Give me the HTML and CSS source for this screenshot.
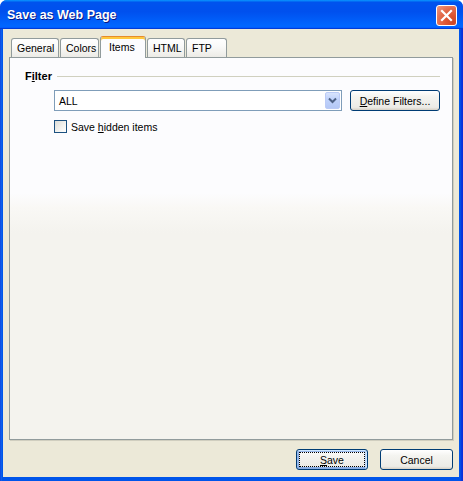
FILE: index.html
```html
<!DOCTYPE html>
<html>
<head>
<meta charset="utf-8">
<title>Save as Web Page</title>
<link rel="stylesheet" href="styles.css">
</head>
<body>
<div class="window">
  <div class="titlebar">
    <span class="title">Save as Web Page</span>
    <span class="close">
      <svg width="13" height="13" viewBox="0 0 13 13"><path d="M2 2 L11 11 M11 2 L2 11" stroke="#fff" stroke-width="2.2" stroke-linecap="square"/></svg>
    </span>
  </div>
  <div class="client">
    <div class="tabstrip">
      <div class="tab w-general">General</div>
      <div class="tab w-colors">Colors</div>
      <div class="tab selected w-items">Items</div>
      <div class="tab w-html">HTML</div>
      <div class="tab w-ftp">FTP</div>
    </div>
    <div class="pane">
      <div class="group-head">
        <span class="group-label">F<u>i</u>lter</span>
        <span class="group-line"></span>
      </div>
      <div class="filter-row">
        <div class="combo">
          <span class="combo-text">ALL</span>
          <span class="combo-btn">
            <svg width="9" height="7" viewBox="0 0 9 7"><path d="M1 1.5 L4.5 5 L8 1.5" fill="none" stroke="#4D6185" stroke-width="2"/></svg>
          </span>
        </div>
        <button class="btn define"><u>D</u>efine Filters...</button>
      </div>
      <label class="check-row">
        <span class="checkbox"></span>
        <span>Save <u>h</u>idden items</span>
      </label>
    </div>
    <div class="buttons">
      <button class="btn default"><span class="focus"><u>S</u>ave</span></button>
      <button class="btn cancel">Cancel</button>
    </div>
  </div>
</div>
</body>
</html>
```
FILE: styles.css
```css
html, body {
  margin: 0;
  padding: 0;
  background: #ffffff;
}
body {
  font-family: "Liberation Sans", Arial, sans-serif;
  font-size: 10.5px;
  color: #000;
}
.window {
  width: 463px;
  height: 481px;
  box-sizing: border-box;
  display: flex;
  flex-direction: column;
  background: linear-gradient(90deg, #0831D9 0, #166AEE 1px, #0055EA 2px, #0055EA 460px, #0831D9 462px);
  border-radius: 7px 7px 0 0;
  overflow: hidden;
}
.titlebar {
  height: 29px;
  flex: none;
  display: flex;
  align-items: center;
  justify-content: space-between;
  padding: 0 6px 0 7px;
  background: linear-gradient(180deg, #0997FF, #0053EE 8%, #0050EE 40%, #0066FF 88%, #0066FF 93%, #005BFF 95%, #003DD7 96%, #003DD7);
}
.title {
  font-family: "Liberation Sans", Arial, sans-serif;
  font-weight: bold;
  font-size: 12.5px;
  color: #fff;
  text-shadow: 1px 1px #0A1883;
  padding-top: 1px;
}
.close {
  width: 19px;
  height: 19px;
  border: 1px solid #fff;
  border-radius: 3px;
  background: radial-gradient(circle at 85% 85%, #CC4625 0, #DC5531 30%, #E36B4B 60%, #F09A80 100%);
  display: flex;
  align-items: center;
  justify-content: center;
  margin-top: 1px;
}
.client {
  flex: 1;
  margin: 0 4px 4px 3px;
  background: #ECE9D8;
  display: flex;
  flex-direction: column;
  padding: 7px 6px 7px 6px;
}
.tabstrip {
  height: 21px;
  display: flex;
  align-items: flex-end;
  gap: 1px;
  padding-left: 2px;
}
.tab {
  box-sizing: border-box;
  height: 19px;
  border: 1px solid #919B9C;
  border-bottom: none;
  border-radius: 3px 3px 0 0;
  background: linear-gradient(180deg, #FFFFFF 0, #FAFAF9 40%, #ECEBE6 100%);
  display: flex;
  align-items: center;
  padding-left: 5px;
  white-space: nowrap;
}
.tab.selected {
  height: 22px;
  margin-bottom: -1px;
  position: relative;
  z-index: 1;
  background: #FCFCFE;
  border-top: 1px solid #E68B2C;
  box-shadow: inset 0 2px #FFC83C;
  padding-left: 8px;
  padding-bottom: 2px;
}
.w-general { width: 48px; }
.w-colors { width: 39px; }
.w-items { width: 46px; }
.w-html { width: 38px; }
.w-ftp { width: 41px; }
.pane {
  height: 383px;
  box-sizing: border-box;
  border: 1px solid #919B9C;
  box-shadow: 1px 1px #D0CEBF;
  background: linear-gradient(180deg, #FCFCFE 0, #FCFCFE 135px, #F9F8F5 150px, #F4F3EE 175px, #F4F3EE 100%);
  padding: 11px 12px 0 15px;
  display: flex;
  flex-direction: column;
}
.group-head {
  display: flex;
  align-items: center;
  height: 14px;
}
.group-label {
  font-weight: bold;
  font-size: 11px;
  color: #000;
}
.group-line {
  flex: 1;
  height: 0;
  border-top: 1px solid #D0D0BF;
  margin-left: 5px;
}
.filter-row {
  display: flex;
  margin-top: 7px;
  margin-left: 29px;
  gap: 8px;
}
.combo {
  width: 288px;
  height: 21px;
  box-sizing: border-box;
  border: 1px solid #7F9DB9;
  background: #fff;
  display: flex;
  align-items: center;
  justify-content: space-between;
  padding: 1px 1px 1px 4px;
}
.combo-btn {
  width: 15px;
  height: 17px;
  box-sizing: border-box;
  border: 1px solid #BBCBF6;
  border-radius: 2px;
  background: linear-gradient(180deg, #D8E4FD 0, #C1D3FB 40%, #B4C8F6 100%);
  display: flex;
  align-items: center;
  justify-content: center;
}
.btn {
  font-family: "Liberation Sans", Arial, sans-serif;
  font-size: 10.5px;
  color: #000;
  height: 21px;
  box-sizing: border-box;
  border: 1px solid #003C74;
  border-radius: 3px;
  background: linear-gradient(180deg, #FFFFFF 0, #F4F4F0 30%, #ECEBE6 86%, #D6D0C5 100%);
  padding: 0;
  display: flex;
  align-items: center;
  justify-content: center;
}
.define {
  width: 90px;
}
.check-row {
  display: flex;
  align-items: center;
  margin-top: 9px;
  margin-left: 29px;
  gap: 4px;
  height: 13px;
}
.checkbox {
  width: 13px;
  height: 13px;
  box-sizing: border-box;
  border: 1px solid #1C5180;
  background: linear-gradient(135deg, #DCDCD7 0, #F3F3F0 60%, #FFFFFF 100%);
}
.buttons {
  display: flex;
  justify-content: flex-end;
  gap: 12px;
  margin-top: 9px;
}
.default {
  width: 72px;
  box-shadow: inset -1px 1px #CEE7FF, inset 1px 2px #98B8EA, inset -2px 2px #BCD4F6, inset 1px -1px #89ADE4, inset 2px -2px #89ADE4;
}
.focus {
  display: flex;
  align-items: center;
  justify-content: center;
  width: 64px;
  height: 13px;
  border: 1px dotted #000;
}
.cancel {
  width: 73px;
}
```
